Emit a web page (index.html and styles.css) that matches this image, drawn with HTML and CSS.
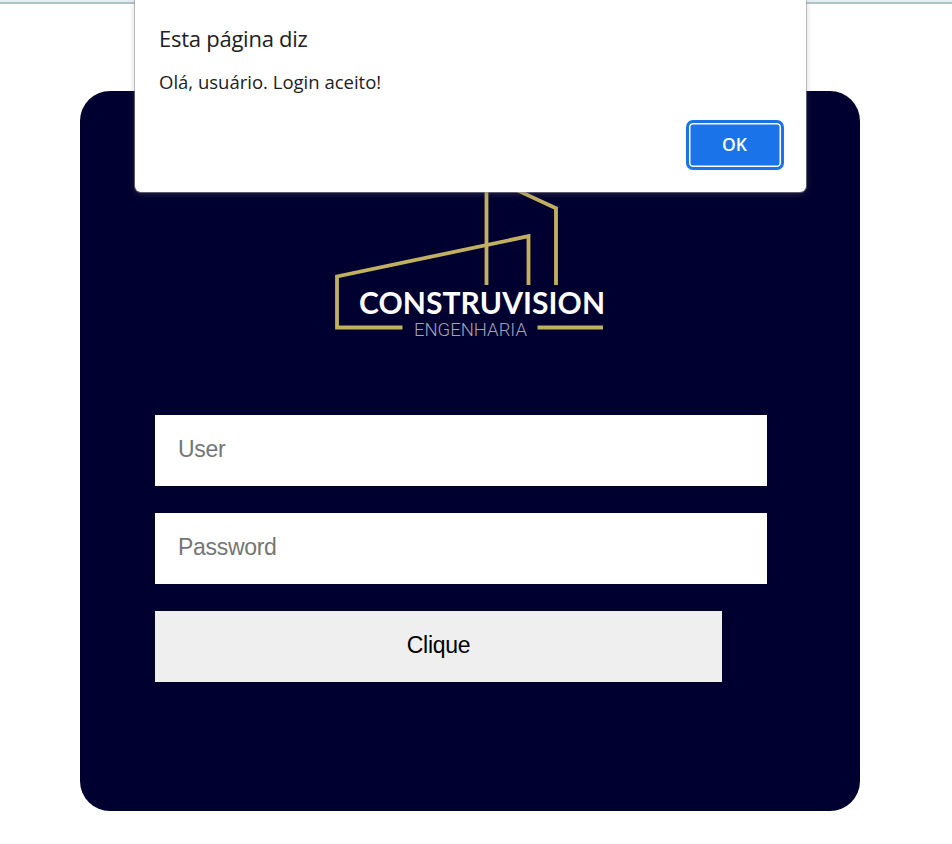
FILE: index.html
```html
<!DOCTYPE html>
<html lang="pt-BR">
<head>
<meta charset="utf-8">
<title>Login</title>
<link rel="stylesheet" href="styles.css">
</head>
<body>
<div class="topbar"></div>
<main class="card">
  <svg class="logo" viewBox="330 170 280 170" width="280" height="170" role="img" aria-label="Construvision Engenharia">
    <g class="logo-lines">
      <path d="M402.5 327.5H337V276.5L528.5 236.2V285"/>
      <path d="M486.5 285V176L556 208.3V285"/>
      <path d="M537.5 327.5H603"/>
    </g>
    <text class="logo-name" x="359" y="313.5" textLength="246">CONSTRUVISION</text>
    <text class="logo-sub" x="414" y="336" textLength="113">ENGENHARIA</text>
  </svg>
  <form class="form">
    <input class="field" type="text" placeholder="User">
    <input class="field" type="password" placeholder="Password">
    <button class="submit" type="button">Clique</button>
  </form>
</main>
<section class="dialog" role="alertdialog">
  <h1 class="dialog-title"><span>Esta página diz</span></h1>
  <p class="dialog-text"><span>Olá, usuário. Login aceito!</span></p>
  <button class="ok" type="button">OK</button>
</section>
</body>
</html>
```
FILE: styles.css
```css
* { box-sizing: border-box; }
body {
  margin: 0;
  height: 844px;
  overflow: hidden;
  background: #fff;
  font-family: "Liberation Sans", Arial, sans-serif;
}
.topbar {
  height: 4px;
  background: #e1eff4;
  border-bottom: 2px solid #b3c2c4;
}
.card {
  width: 780px;
  height: 720px;
  margin: 87px 0 0 80px;
  padding: 79px 75px 0;
  border-radius: 30px;
  background: #000030;
}
.logo {
  display: block;
  margin: 0 0 75px 175px;
}
.logo-lines {
  fill: none;
  stroke: #c0b060;
  stroke-width: 3.8;
}
.logo-name {
  fill: #fff;
  font: 700 30px Lato, sans-serif;
}
.logo-sub {
  fill: #a2a2b8;
  font: 300 18.5px Roboto, Lato, sans-serif;
}
.form {
  display: flex;
  flex-direction: column;
  gap: 27px;
}
.field,
.submit {
  height: 71px;
  border: 0;
  border-radius: 0;
  font: 23px "Liberation Sans", Arial, sans-serif;
  letter-spacing: -.3px;
}
.field {
  width: 612px;
  padding: 0 22px 3px 23px;
  background: #fff;
}
.field::placeholder { color: #757575; }
.submit {
  width: 567px;
  padding: 0 0 3px;
  background: #efefef;
  color: #000;
}
.dialog {
  position: absolute;
  top: 0;
  left: 135px;
  width: 671px;
  height: 192px;
  padding: 23px 22.5px 0 24px;
  display: flex;
  flex-direction: column;
  border-radius: 0 0 6px 6px;
  background: #fff;
  box-shadow: 0 0 0 1px rgba(150, 150, 150, .55), 0 2px 7px rgba(110, 110, 110, .35);
  color: #202124;
  font-family: "Open Sans", "Noto Sans", sans-serif;
}
.dialog-title {
  margin: 0;
  font-size: 22px;
  font-weight: 400;
  line-height: 30px;
  letter-spacing: -.25px;
}
.dialog-text {
  margin: 16px 0 0;
  font-size: 18.5px;
  line-height: 26px;
  letter-spacing: 0;
}
.ok {
  align-self: flex-end;
  width: 98px;
  height: 50px;
  margin-top: 24.5px;
  padding: 0 0 1px;
  border: 3px solid #1a73e8;
  border-radius: 7px;
  background: #1a73e8;
  box-shadow: inset 0 0 0 1.5px #fff;
  color: #fff;
  font: 600 17.5px "Open Sans", sans-serif;
}
```
